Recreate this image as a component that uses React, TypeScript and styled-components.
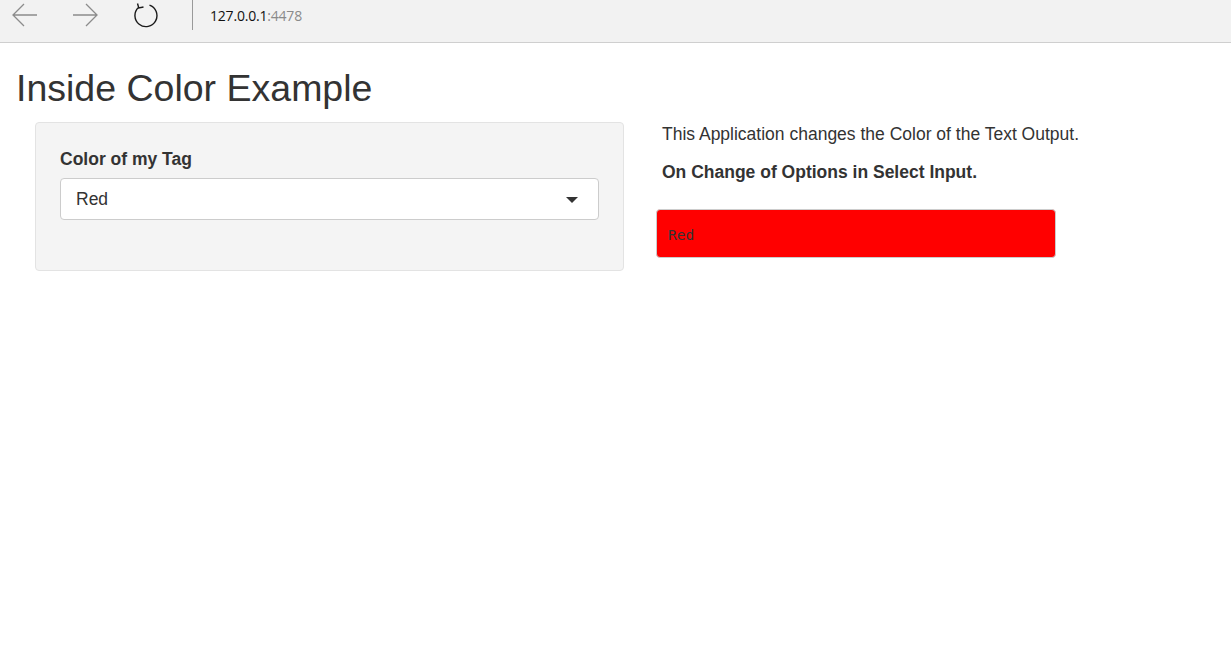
import React from "react";
import styled, { createGlobalStyle } from "styled-components";

const Global = createGlobalStyle`
  html, body { margin: 0; padding: 0; background: #fff; }
  body { font-family: "Liberation Sans", Arial, sans-serif; color: #333; }
  * { box-sizing: border-box; }
`;

const Chrome = styled.div`
  height: 43px;
  background: #f2f2f2;
  border-bottom: 1px solid #cfcfcf;
  display: flex;
  align-items: flex-start;
`;

const NavIcon = styled.div<{ $w: number; $ml: number }>`
  width: ${(p) => p.$w}px;
  margin-left: ${(p) => p.$ml}px;
  height: 30px;
  display: flex;
  align-items: center;
  justify-content: center;
`;

const Separator = styled.div`
  width: 1px;
  height: 30px;
  background: #9a9a9a;
  margin-left: 33px;
`;

const Url = styled.div`
  margin-left: 17px;
  height: 30px;
  display: flex;
  align-items: center;
  font-family: "Open Sans", "Liberation Sans", sans-serif;
  font-size: 14px;
  color: #111;
  letter-spacing: -0.2px;
`;

const Port = styled.span`
  color: #8a8a8a;
`;

const Page = styled.div`
  padding: 0 16px 0 16px;
`;

const Title = styled.h2`
  margin: 25px 0 12.5px;
  font-size: 37.5px;
  font-weight: 400;
  line-height: 1.1;
  color: #333;
`;

const Row = styled.div`
  display: flex;
  align-items: flex-start;
`;

const Sidebar = styled.div`
  width: 589px;
  margin-left: 19px;
  background: #f4f4f4;
  border: 1px solid #e3e3e3;
  border-radius: 4px;
  padding: 23.75px 24px 50px;
`;

const Label = styled.label`
  display: block;
  font-size: 17.5px;
  font-weight: 700;
  line-height: 25px;
  margin-bottom: 6.25px;
`;

const SelectBox = styled.div`
  height: 42.5px;
  background: #fff;
  border: 1px solid #cccccc;
  border-radius: 4px;
  display: flex;
  align-items: center;
  justify-content: space-between;
  padding: 0 20px 0 15px;
  font-size: 17.5px;
  color: #333;
`;

const Caret = styled.span`
  width: 0;
  height: 0;
  border-left: 6.25px solid transparent;
  border-right: 6.25px solid transparent;
  border-top: 6.25px solid #333;
  margin-top: 1px;
`;

const Main = styled.div`
  margin-left: 32px;
  flex: 0 0 400px;
`;

const Text = styled.p<{ $bold?: boolean }>`
  margin: 0 0 ${(p) => (p.$bold ? 23.5 : 13.5)}px;
  padding-left: 6px;
  font-size: 17.5px;
  line-height: 25px;
  font-weight: ${(p) => (p.$bold ? 700 : 400)};
  white-space: nowrap;
`;

const Output = styled.pre`
  margin: 0;
  width: 400px;
  height: 49px;
  background: #ff0000;
  border: 1px solid #cccccc;
  border-radius: 4px;
  padding: 14px 11px 0;
  font-family: "DejaVu Sans Mono", "Liberation Mono", monospace;
  font-size: 14.5px;
  line-height: 23px;
  color: #333;
`;

export default function App() {
  return (
    <>
      <Global />
      <Chrome>
        <NavIcon $w={26} $ml={12}>
          <svg width="26" height="24" viewBox="0 0 26 24" fill="none" stroke="#8c8c8c" strokeWidth="1.3">
            <path d="M1 12 H25 M12 1 L1 12 L12 23" />
          </svg>
        </NavIcon>
        <NavIcon $w={26} $ml={34}>
          <svg width="26" height="24" viewBox="0 0 26 24" fill="none" stroke="#8c8c8c" strokeWidth="1.3">
            <path d="M1 12 H25 M14 1 L25 12 L14 23" />
          </svg>
        </NavIcon>
        <NavIcon $w={26} $ml={35}>
          <svg width="26" height="26" viewBox="0 0 26 26" fill="none" stroke="#1a1a1a" strokeWidth="1.4">
            <path d="M16.5 3.2 A11 11 0 1 1 5.5 5.5" />
            <path d="M4.5 1.5 L5.8 6 L10.5 5" />
          </svg>
        </NavIcon>
        <Separator />
        <Url>
          127.0.0.1<Port>:4478</Port>
        </Url>
      </Chrome>
      <Page>
        <Title>Inside Color Example</Title>
        <Row>
          <Sidebar>
            <Label>Color of my Tag</Label>
            <SelectBox>
              <span>Red</span>
              <Caret />
            </SelectBox>
          </Sidebar>
          <Main>
            <Text>This Application changes the Color of the Text Output.</Text>
            <Text $bold>On Change of Options in Select Input.</Text>
            <Output>Red</Output>
          </Main>
        </Row>
      </Page>
    </>
  );
}
